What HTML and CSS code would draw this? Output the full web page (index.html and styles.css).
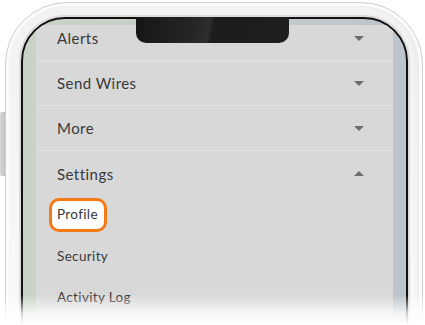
FILE: index.html
```html
<!DOCTYPE html>
<html>
<head>
<meta charset="utf-8">
<link rel="stylesheet" href="styles.css">
</head>
<body>
<div class="stage">
  <div class="side-button"></div>
  <div class="phone">
    <div class="screen">
      <div class="panel">
        <ul class="menu">
          <li class="row"><span>Alerts</span><i class="caret down"></i></li>
          <li class="row"><span>Send Wires</span><i class="caret down"></i></li>
          <li class="row"><span>More</span><i class="caret down"></i></li>
          <li class="row open"><span>Settings</span><i class="caret up"></i></li>
        </ul>
        <ul class="submenu">
          <li class="sub"><span class="highlight">Profile</span></li>
          <li class="sub"><span>Security</span></li>
          <li class="sub"><span>Activity Log</span></li>
        </ul>
      </div>
    </div>
  </div>
  <div class="notch"></div>
  <div class="fade"></div>
</div>
</body>
</html>
```
FILE: styles.css
```css
* { box-sizing: border-box; }
html, body {
  margin: 0;
  padding: 0;
  background: #ffffff;
}
body {
  width: 425px;
  height: 325px;
  overflow: hidden;
  font-family: Lato, "Open Sans", sans-serif;
  color: #383838;
}
.stage {
  position: relative;
  width: 425px;
  height: 325px;
  overflow: hidden;
}
.side-button {
  position: absolute;
  left: 0;
  top: 112px;
  width: 5px;
  height: 64px;
  border-radius: 2px 0 0 2px;
  background: linear-gradient(to right, #d6d6d6, #c4c4c4);
}
.phone {
  margin: 2px 2px 0 5px;
  height: 420px;
  border: 1px solid #cfcfcf;
  border-radius: 62px;
  background: linear-gradient(to bottom, #f2f2f2, #fafafa);
  box-shadow: inset 0 0 0 3px #fbfbfb, inset -4px 0 6px rgba(0,0,0,0.06);
  padding: 14px 14px 0 15px;
}
.screen {
  height: 420px;
  border: 2px solid #111111;
  border-radius: 44px;
  background: linear-gradient(to right, #c9d3c3 0%, #c5ccca 50%, #bcc4cd 100%);
  box-shadow: 0 0 0 2px #dcdcdc;
  padding: 6px 13px 0 13px;
  overflow: hidden;
}
.panel {
  background: #d8d8d8;
  height: 400px;
  overflow: hidden;
}
.menu, .submenu {
  list-style: none;
  margin: 0;
  padding: 0;
}
.menu {
  margin-top: -9px;
}
.submenu {
  margin-top: -2px;
}
.row {
  height: 45px;
  display: flex;
  align-items: center;
  justify-content: space-between;
  padding: 0 29px 0 21px;
  border-bottom: 1px solid #e2e2e2;
  font-size: 15px;
  letter-spacing: 0.45px;
}
.row.open {
  border-bottom: none;
}
.caret {
  width: 0;
  height: 0;
  border-left: 5px solid transparent;
  border-right: 5px solid transparent;
}
.caret.down {
  border-top: 5px solid #6c6c6c;
}
.caret.up {
  border-bottom: 5px solid #6c6c6c;
}
.sub {
  height: 41px;
  display: flex;
  align-items: center;
  padding-left: 21px;
  font-size: 13.5px;
  letter-spacing: 0.35px;
}
.highlight {
  display: inline-block;
  margin-left: -8px;
  padding: 5px 6px 6px 5px;
  border: 3px solid #f57a16;
  border-radius: 10px;
  background: #ffffff;
  line-height: 17px;
}
.notch {
  position: absolute;
  left: 136px;
  top: 17px;
  width: 153px;
  height: 26px;
  border-radius: 0 0 10px 10px;
  background: linear-gradient(100deg, #151515 0%, #262726 40%, #2c2d2c 48%, #1e1c1c 50%, #1f1d1d 100%);
}
.fade {
  position: absolute;
  left: 0;
  right: 0;
  bottom: 0;
  height: 30px;
  background: linear-gradient(to bottom, rgba(255,255,255,0) 0%, rgba(255,255,255,0.8) 60%, #ffffff 100%);
}
```
